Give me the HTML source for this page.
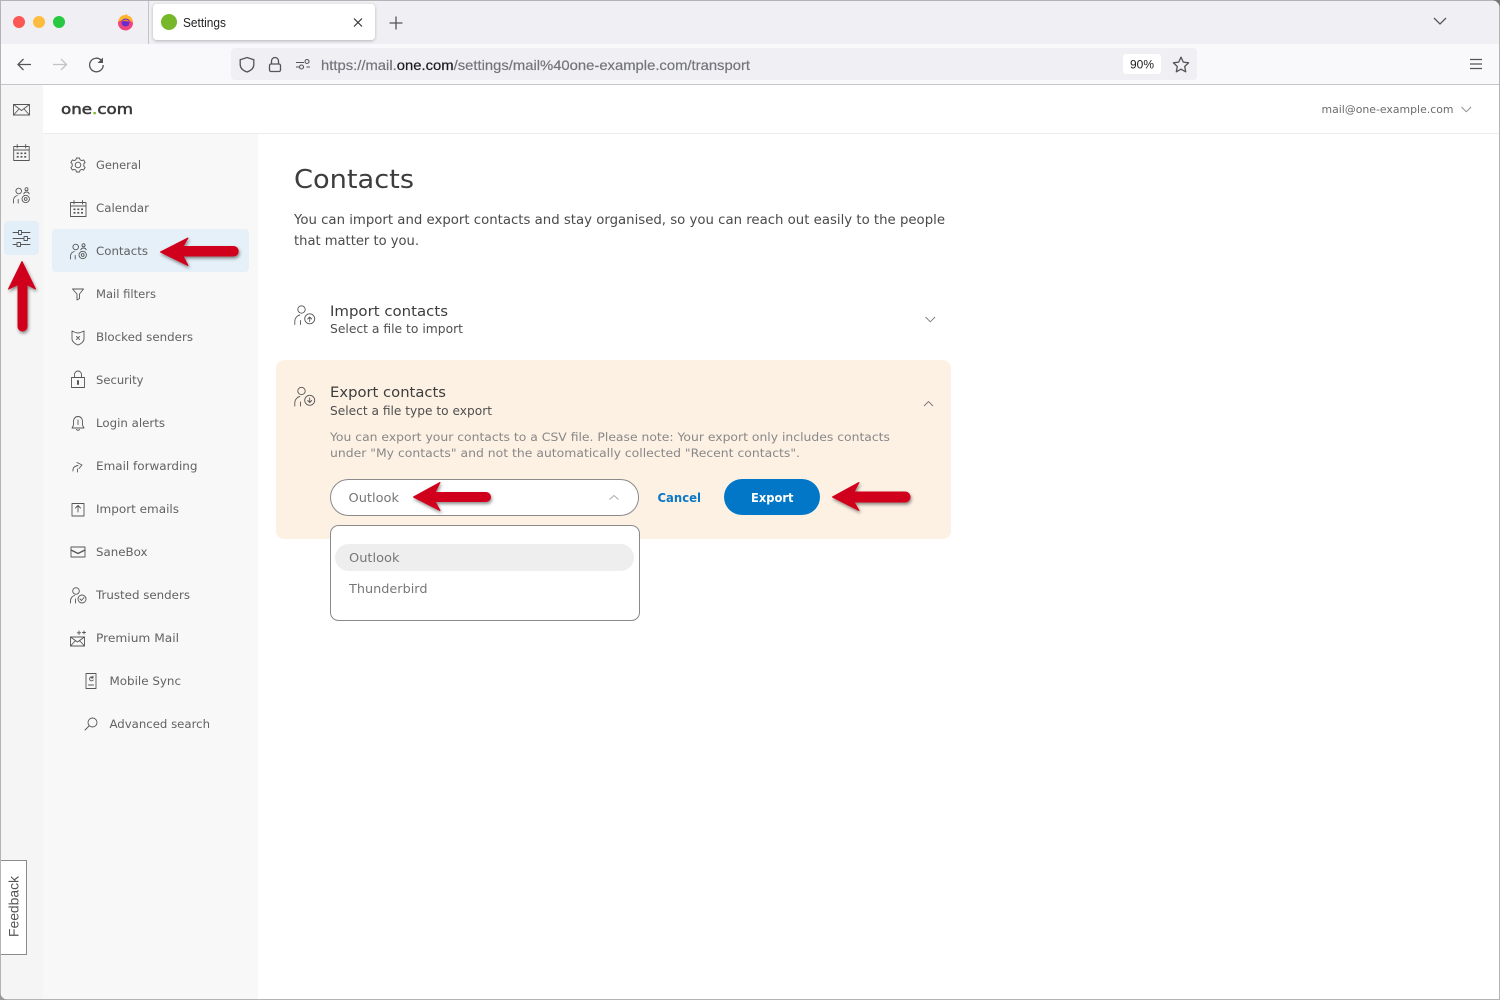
<!DOCTYPE html>
<html lang="en"><head><meta charset="utf-8"><title>Settings</title>
<style>
html,body{margin:0;padding:0;background:#fff;width:1500px;height:1000px;overflow:hidden}
svg{display:block}
text{font-family:"DejaVu Sans","Liberation Sans",sans-serif}
.s{font-size:11.2px;fill:#626262}
.i{fill:none;stroke:#565656;stroke-width:.9;stroke-linecap:round;stroke-linejoin:round}
.u{font-family:"Liberation Sans",sans-serif;font-size:14px;fill:#74747c;stroke:#74747c;stroke-width:.2}
.b{fill:#d0021b;stroke:#d0021b;stroke-width:1;stroke-linejoin:round}
</style></head><body>
<svg xmlns="http://www.w3.org/2000/svg" width="1500" height="1000" viewBox="0 0 1500 1000">
<defs>
<filter id="sh" x="-30%" y="-30%" width="160%" height="170%"><feDropShadow dx="1" dy="2" stdDeviation="1.6" flood-color="#000" flood-opacity=".45"/></filter>
<filter id="ts" x="-5%" y="-20%" width="110%" height="150%"><feDropShadow dx="0" dy="1" stdDeviation="1.5" flood-color="#000" flood-opacity=".25"/></filter>
<g id="cal"><rect x=".5" y="2.500" width="15.500" height="14" class="i"/><path class="i" d="M.5 6h15.500M4 .5v3.500M12.500 .5v3.500"/><path d="M3.500 8.500h2v1.600h-2zM7.300 8.500h2v1.600h-2zM11 8.500h2v1.600h-2zM3.500 12h2v1.600h-2zM7.300 12h2v1.600h-2zM11 12h2v1.600h-2z" fill="#565656"/></g>
<g id="con"><circle cx="5.700" cy="4" r="2.800" class="i"/><path class="i" d="M.5 16v-2.500c0-2.800 1.800-4.500 3.800-5M5.200 12.500V16"/><circle cx="13.500" cy="2.200" r="1.500" class="i"/><path class="i" d="M10.800 6.800c.5-1.200 1.600-1.800 2.700-1.800s2.200.6 2.700 1.800"/><circle cx="12.700" cy="12" r="3.700" class="i"/><circle cx="12.700" cy="12" r="1.400" class="i"/></g>
<g id="per"><circle cx="7.500" cy="4" r="3.700" class="i"/><path class="i" d="M.8 19v-3c0-3.500 2.500-6 5-6.500M6.500 15v4"/><circle cx="15.700" cy="13.300" r="5" class="i"/></g>
</defs>

<!-- browser chrome -->
<rect width="1500" height="1000" fill="#fff"/>
<rect width="1500" height="44" fill="#f0f0f4"/>
<rect y="44" width="1500" height="40" fill="#f9f9fb"/>
<rect y="84" width="1500" height="1" fill="#c6c6c8"/>
<rect x="148" y="0" width="1" height="44" fill="#c4c4c8"/>
<circle cx="19" cy="22" r="6" fill="#fc5753"/><circle cx="39" cy="22" r="6" fill="#fdbc40"/><circle cx="59" cy="22" r="6" fill="#28c840"/>
<circle cx="125.500" cy="23" r="7.500" fill="#f0447e"/><path d="M118 22c1-5 4-7 7-7l2-1 .5 1.500c3 .5 5.500 3 5.500 7-1.500 0-3-3-5.500-3.500-3 0-6 1-9.500 3z" fill="#ffb52e"/><circle cx="125.500" cy="22.500" r="4" fill="#6a2bd0"/><path d="M122 21.500c2-2.500 6-2.500 7 .5-2-1-5-1.500-7-.5z" fill="#ff8a1e"/>
<rect x="153" y="4" width="222" height="36" rx="4" fill="#fff" filter="url(#ts)"/>
<circle cx="169" cy="22" r="8" fill="#76b82a"/>
<text x="183" y="27" textLength="43" lengthAdjust="spacingAndGlyphs" style="font-family:'Liberation Sans',sans-serif;font-size:12.500px;fill:#222">Settings</text>
<path d="M354 18.500l8 8M362 18.500l-8 8" stroke="#333" stroke-width="1.200" fill="none"/>
<path d="M396 16.500v13M389.500 23h13" stroke="#555" stroke-width="1.300" fill="none"/>
<path d="M1434 18l6 6 6-6" stroke="#555" stroke-width="1.300" fill="none"/>
<path d="M31 64.500H18M23.500 59l-5.500 5.500 5.500 5.500" fill="none" stroke="#555" stroke-width="1.300"/>
<path d="M53 64.500h13M61 59l5.500 5.500-5.500 5.500" fill="none" stroke="#c2c2c6" stroke-width="1.300"/>
<path d="M101.500 60.500a6.800 6.800 0 1 0 1.700 4.500" fill="none" stroke="#555" stroke-width="1.300"/><path d="M103 57.500v5.500h-5.500z" fill="#555"/>
<rect x="231" y="48" width="966" height="32" rx="4" fill="#f0f0f4"/>
<path d="M247 57.500l6.800 2.200v4.800c0 3.800-3 6.200-6.800 7.500-3.800-1.300-6.800-3.700-6.800-7.500v-4.800z" fill="none" stroke="#555" stroke-width="1.300"/>
<rect x="269.500" y="64" width="11" height="7.500" rx="1.500" fill="none" stroke="#555" stroke-width="1.300"/><path d="M271.500 64v-3a3.500 3.500 0 0 1 7 0v3" fill="none" stroke="#555" stroke-width="1.300"/>
<path d="M296 62.500h8M306.500 67h3.500M296 67h3" stroke="#555" stroke-width="1.100" fill="none"/><circle cx="307" cy="61.500" r="2" fill="none" stroke="#555" stroke-width="1.100"/><circle cx="301.500" cy="67" r="2" fill="none" stroke="#555" stroke-width="1.100"/>
<text class="u" x="321" y="70" textLength="429" lengthAdjust="spacingAndGlyphs">https://mail.<tspan fill="#1a1a20" stroke="#1a1a20">one.com</tspan>/settings/mail%40one-example.com/transport</text>
<rect x="1123" y="54" width="38" height="20" rx="3" fill="#fff"/>
<text x="1130" y="68.500" textLength="24" lengthAdjust="spacingAndGlyphs" style="font-family:'Liberation Sans',sans-serif;font-size:12px;fill:#222">90%</text>
<path d="M1181 57.200l2.300 4.900 5.300.7-3.900 3.700 1 5.300-4.700-2.600-4.700 2.600 1-5.300-3.900-3.700 5.300-.7z" fill="none" stroke="#555" stroke-width="1.300" stroke-linejoin="round"/>
<path d="M1470 59.500h12M1470 64h12M1470 68.500h12" stroke="#555" stroke-width="1.200" fill="none"/>

<!-- app frame -->
<rect x="1" y="85" width="42" height="915" fill="#f5f5f5"/>
<rect x="43" y="134" width="215" height="866" fill="#f8f8f8"/>
<rect x="43" y="133" width="1457" height="1" fill="#ededed"/>
<text x="61" y="114" textLength="72" lengthAdjust="spacingAndGlyphs" style="font-size:14.500px;fill:#3a3a3a;stroke:#3a3a3a;stroke-width:.55">one<tspan fill="#76b82a" stroke="#76b82a">.</tspan>com</text>
<text x="1321.500" y="113" textLength="132" lengthAdjust="spacingAndGlyphs" style="font-size:11px;fill:#6b6b6b">mail@one-example.com</text>
<path d="M1461.500 107l4.800 4.800 4.800-4.800" fill="none" stroke="#888" stroke-width=".9"/>

<!-- rail -->
<rect x="4" y="221" width="35" height="34" rx="4" fill="#e3eff8"/>
<g transform="translate(13 104)"><rect x=".5" y=".5" width="16" height="10.500" class="i"/><path class="i" d="M.5 .5l8 6 8-6M.5 11l5.500-6M16.500 11l-5.500-6"/></g>
<use href="#cal" x="13.200" y="144"/>
<use href="#con" x="13" y="187"/>
<g transform="translate(13 230)"><path class="i" d="M0 2.500h5.500M9 2.500h8M0 8.500h11M14.500 8.500H17M0 14.500h4M7.500 14.500H17"/><rect x="5.500" y=".5" width="3" height="4" class="i"/><rect x="11" y="6.500" width="3.500" height="4" class="i"/><rect x="4" y="12.500" width="3.500" height="4" class="i"/></g>

<!-- sidebar -->
<rect x="52" y="229" width="197" height="43" rx="4" fill="#e5f0f8"/>
<g class="i"><circle cx="78" cy="165" r="2.800"/><path d="M76.500 158h3l.6 1.800 1.700.8 1.800-.7 1.500 2.600-1.300 1.300v2.400l1.300 1.300-1.500 2.600-1.800-.7-1.700.8-.6 1.800h-3l-.6-1.800-1.700-.8-1.800.7-1.500-2.600 1.300-1.300v-2.400l-1.300-1.300 1.500-2.600 1.800.7 1.700-.8z"/></g>
<use href="#cal" x="70" y="200"/>
<use href="#con" x="70" y="243"/>
<path class="i" d="M72.500 289h11l-4 5v4.500l-2.500 1.500v-6z"/>
<path class="i" d="M72 331c2 1 4 1.800 6 2 2-.2 4-1 6-2v8c0 2.500-3 5-6 6-3-1-6-3.500-6-6zM76.500 336.500l3 3M79.500 336.500l-3 3"/>
<g class="i"><rect x="71.500" y="377.500" width="13" height="10"/><path d="M74.500 377.500v-3a3.500 3.500 0 0 1 7 0v3"/><path d="M78 381v3" stroke-width="2"/></g>
<path class="i" d="M78 416.500c-3 0-4.500 2.500-4.500 5v3c0 1.500-1 2.500-1.500 3.500h12c-.5-1-1.500-2-1.500-3.500v-3c0-2.500-1.500-5-4.500-5zM76.500 429.500c.5 1 2.500 1 3 0M78 420v4.500"/>
<path class="i" d="M73 471c-.5-3 1.500-5 5-5.500M77 462.500l5 2.500-3 3.500M77.500 469v3"/>
<g class="i"><path d="M72 503.500V516h12v-12.500z"/><path d="M78 512v-6M75.500 508L78 505.500l2.500 2.500"/></g>
<g class="i"><rect x="71" y="547" width="14" height="10"/><path d="M71 550l7 3.500 7-3.500" stroke-width="1.300"/></g>
<g class="i"><circle cx="76" cy="591" r="3.300"/><path d="M70.500 603v-2c0-3 2-5 4-5.500M75.500 599v4"/><circle cx="82" cy="599" r="4"/><path d="M80 599l1.500 1.500 2.500-3"/></g>
<g class="i"><rect x="70.500" y="637" width="14" height="9"/><path d="M70.500 637l7 5 7-5M70.500 646l5-5.500M84.500 646l-5-5.500M79 631v3.500M77.300 632.800h3.400M84 631v3M82.500 632.500h3"/></g>
<g class="i"><rect x="86" y="673.500" width="10" height="15"/><path d="M88.500 685h5M93 677.500a2 2 0 1 0 .2 2.500M93 676v2h-1.800"/></g>
<g class="i"><circle cx="92.500" cy="722.500" r="4.500"/><path d="M89 726l-4 4"/></g>

<text class="s" x="96" y="169" textLength="45" lengthAdjust="spacingAndGlyphs">General</text>
<text class="s" x="96" y="212" textLength="53" lengthAdjust="spacingAndGlyphs">Calendar</text>
<text class="s" x="96" y="255" textLength="52" lengthAdjust="spacingAndGlyphs">Contacts</text>
<text class="s" x="96" y="298" textLength="60" lengthAdjust="spacingAndGlyphs">Mail filters</text>
<text class="s" x="96" y="341" textLength="97" lengthAdjust="spacingAndGlyphs">Blocked senders</text>
<text class="s" x="96" y="384" textLength="47.500" lengthAdjust="spacingAndGlyphs">Security</text>
<text class="s" x="96" y="427" textLength="69" lengthAdjust="spacingAndGlyphs">Login alerts</text>
<text class="s" x="96" y="470" textLength="101.500" lengthAdjust="spacingAndGlyphs">Email forwarding</text>
<text class="s" x="96" y="513" textLength="83" lengthAdjust="spacingAndGlyphs">Import emails</text>
<text class="s" x="96" y="556" textLength="51.500" lengthAdjust="spacingAndGlyphs">SaneBox</text>
<text class="s" x="96" y="599" textLength="94" lengthAdjust="spacingAndGlyphs">Trusted senders</text>
<text class="s" x="96" y="642" textLength="83" lengthAdjust="spacingAndGlyphs">Premium Mail</text>
<text class="s" x="109.500" y="685" textLength="71.500" lengthAdjust="spacingAndGlyphs">Mobile Sync</text>
<text class="s" x="109.500" y="728" textLength="100.500" lengthAdjust="spacingAndGlyphs">Advanced search</text>

<!-- feedback -->
<rect x=".5" y="860.500" width="26" height="94" fill="#fff" stroke="#8c8c8c"/>
<text transform="translate(18.500 937) rotate(-90)" textLength="61" lengthAdjust="spacingAndGlyphs" style="font-family:'Liberation Sans',sans-serif;font-size:14px;fill:#555">Feedback</text>

<!-- content -->
<text x="294" y="188" textLength="120" lengthAdjust="spacingAndGlyphs" style="font-size:26px;fill:#3d3d3d">Contacts</text>
<text x="294" y="224" textLength="651" lengthAdjust="spacingAndGlyphs" style="font-size:13.200px;fill:#4a4a4a">You can import and export contacts and stay organised, so you can reach out easily to the people</text>
<text x="294" y="245" textLength="125" lengthAdjust="spacingAndGlyphs" style="font-size:13.200px;fill:#4a4a4a">that matter to you.</text>

<use href="#per" x="294" y="305.500"/>
<path class="i" d="M309.700 321.500v-4.500M307.700 319l2-2 2 2"/>
<text x="330" y="316" textLength="118" lengthAdjust="spacingAndGlyphs" style="font-size:13.800px;fill:#3d3d3d">Import contacts</text>
<text x="330" y="333" textLength="133" lengthAdjust="spacingAndGlyphs" style="font-size:12.300px;fill:#4f4f4f">Select a file to import</text>
<path d="M925.500 317l4.800 4.800 4.800-4.800" fill="none" stroke="#777" stroke-width=".9"/>

<rect x="276" y="360" width="675" height="179" rx="8" fill="#fdf1e4"/>
<use href="#per" x="294" y="387"/>
<path class="i" d="M309.700 398v4.500M307.700 400.500l2 2 2-2"/>
<text x="330" y="397" textLength="116" lengthAdjust="spacingAndGlyphs" style="font-size:13.800px;fill:#3d3d3d">Export contacts</text>
<text x="330" y="415" textLength="162" lengthAdjust="spacingAndGlyphs" style="font-size:12.300px;fill:#4f4f4f">Select a file type to export</text>
<path d="M924 406l4.500-4.500 4.500 4.500" fill="none" stroke="#777" stroke-width=".9"/>
<text x="330" y="441" textLength="560" lengthAdjust="spacingAndGlyphs" style="font-size:11.800px;fill:#888">You can export your contacts to a CSV file. Please note: Your export only includes contacts</text>
<text x="330" y="457" textLength="470" lengthAdjust="spacingAndGlyphs" style="font-size:11.800px;fill:#888">under "My contacts" and not the automatically collected "Recent contacts".</text>

<rect x="330.500" y="479.500" width="308" height="36" rx="18" fill="#fff" stroke="#8a8a8a"/>
<text x="348.500" y="502" textLength="50.500" lengthAdjust="spacingAndGlyphs" style="font-size:12.300px;fill:#777">Outlook</text>
<path d="M609.500 499.500l4.500-4 4.500 4" fill="none" stroke="#aaa" stroke-width="1"/>
<text x="657.500" y="502" textLength="43.500" lengthAdjust="spacingAndGlyphs" style="font-size:12.300px;font-weight:bold;fill:#0b78c6">Cancel</text>
<rect x="724" y="479" width="96" height="36" rx="18" fill="#0277c8"/>
<text x="751" y="502" textLength="42.500" lengthAdjust="spacingAndGlyphs" style="font-size:12.300px;font-weight:bold;fill:#fff">Export</text>

<rect x="330.500" y="525.500" width="309" height="95" rx="8" fill="#fff" stroke="#8a8a8a"/>
<rect x="335" y="544" width="299" height="27" rx="13.500" fill="#eeeeee"/>
<text x="349" y="562" textLength="50.500" lengthAdjust="spacingAndGlyphs" style="font-size:12.300px;fill:#777">Outlook</text>
<text x="349" y="593" textLength="78.500" lengthAdjust="spacingAndGlyphs" style="font-size:12.300px;fill:#777">Thunderbird</text>

<!-- red arrows -->
<g filter="url(#sh)">
<path class="b" d="M160.500 252L188 238l-5 8.500h50.500a4.500 4.500 0 0 1 0 9.500H183l5 9.500z"/>
<path class="b" d="M22 261.500L35.500 289l-8.500-4.500v42a4.500 4.500 0 0 1-9 0v-42L8.500 289z"/>
<path class="b" d="M413.500 497l26.500-14.500-5 10h51a4.500 4.500 0 0 1 0 9h-51l5 9z"/>
<path class="b" d="M832.500 497l26.500-14.500-5 9.500h51a5 5 0 0 1 0 10h-51l5 8.500z"/>
</g>

<!-- window edge -->
<rect x="0" y="0" width="1500" height="1" fill="#b4b4b4"/>
<rect x="0" y="0" width="1" height="1000" fill="#b4b4b4"/>
<rect x="1499" y="0" width="1" height="1000" fill="#b4b4b4"/>
<rect x="0" y="999" width="1500" height="1" fill="#b4b4b4"/>
<path d="M1493 0h7v7c-1-3.500-3.500-6-7-7z" fill="#777"/>
<path d="M0 993v7h7c-3.500-1-6-3.500-7-7z" fill="#999"/>
</svg>
</body></html>
